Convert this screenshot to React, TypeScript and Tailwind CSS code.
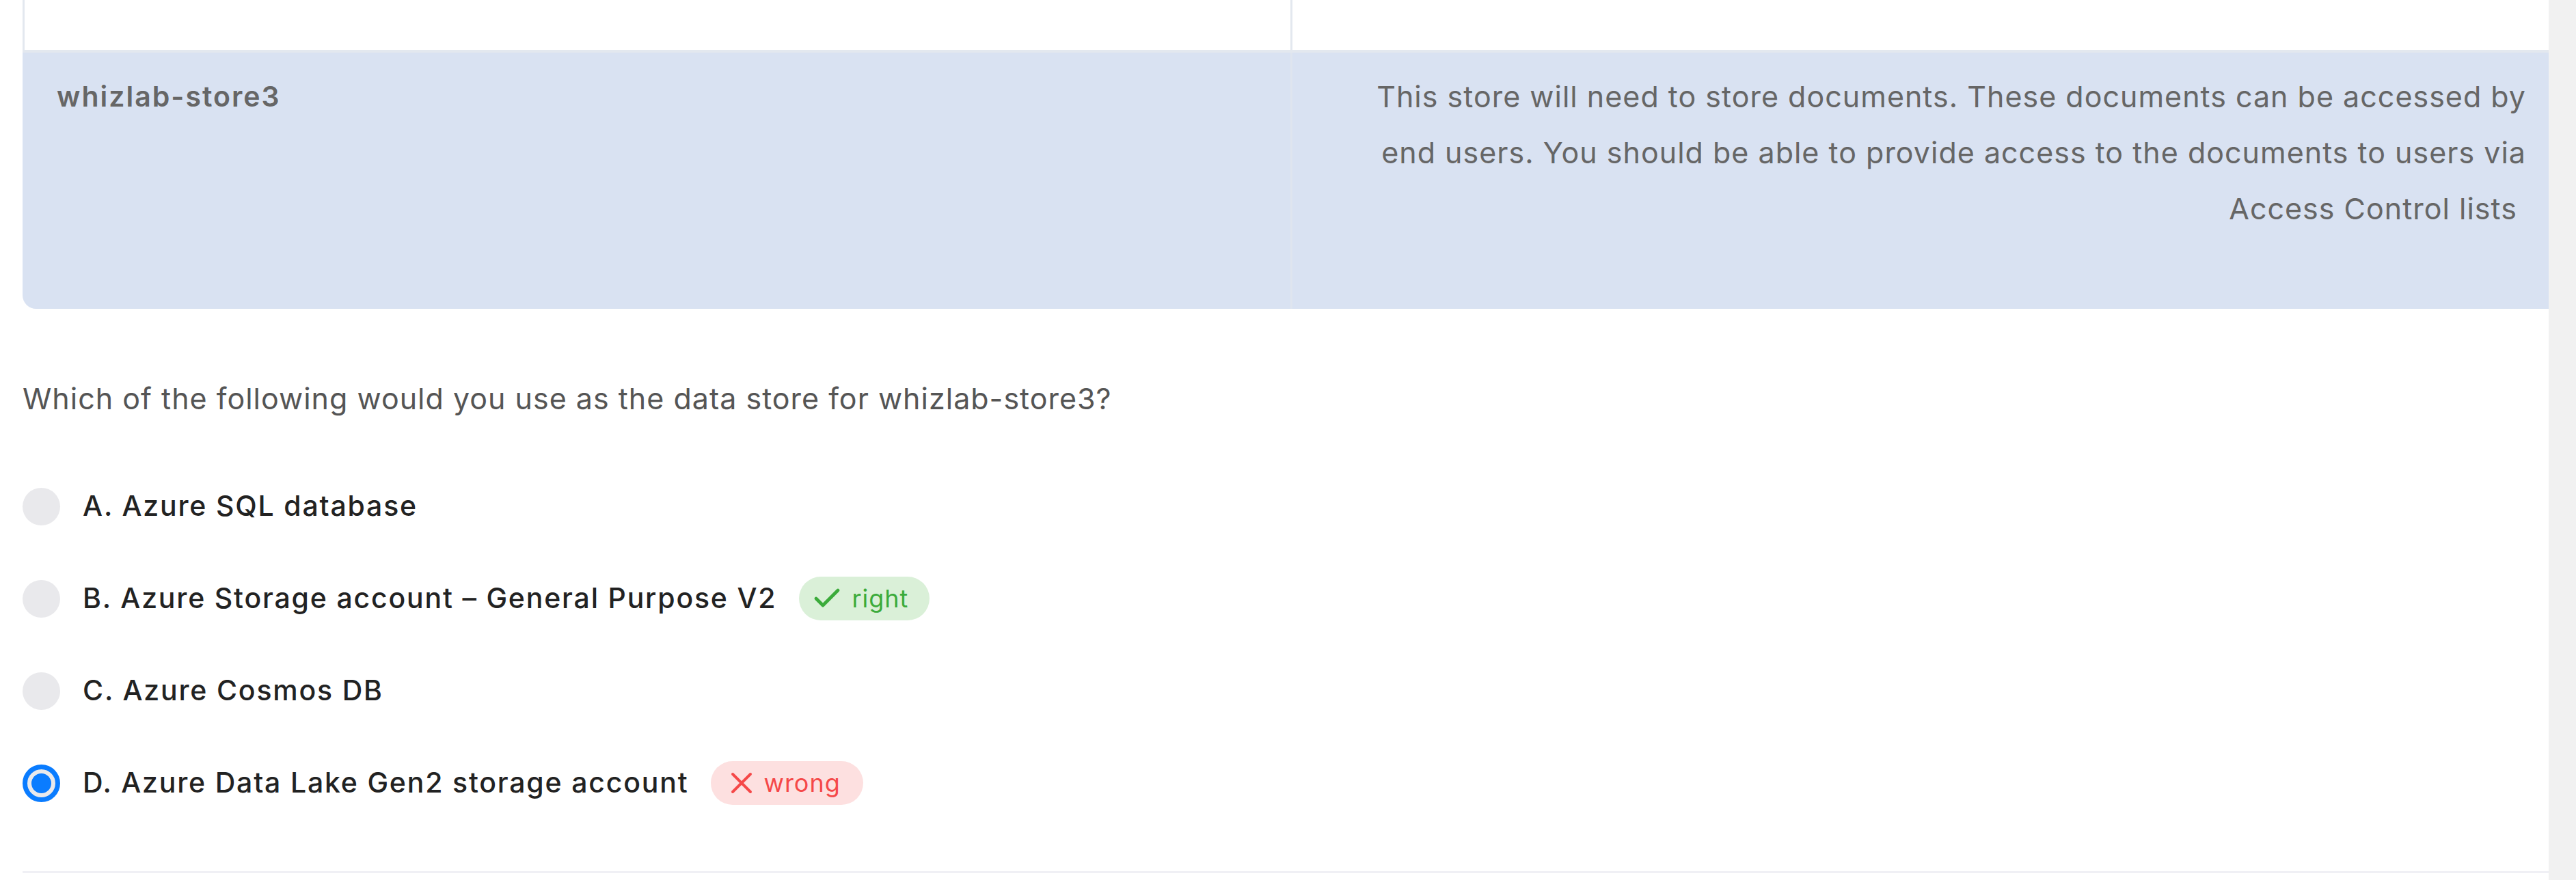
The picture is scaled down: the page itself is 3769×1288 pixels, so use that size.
import { Check, X } from "lucide-react";

const options = [
  { key: "A", label: "Azure SQL database" },
  { key: "B", label: "Azure Storage account – General Purpose V2", status: "right" },
  { key: "C", label: "Azure Cosmos DB" },
  { key: "D", label: "Azure Data Lake Gen2 storage account", status: "wrong", selected: true },
];

const Radio = ({ selected }: { selected?: boolean }) => {
  if (selected) {
    return (
      <span className="flex h-[55px] w-[55px] shrink-0 items-center justify-center rounded-full border-[7px] border-[#0a7cff] bg-[#e9e9ec]">
        <span className="h-[29px] w-[29px] rounded-full bg-[#0a7cff]" />
      </span>
    );
  }
  return <span className="h-[55px] w-[55px] shrink-0 rounded-full bg-[#e9e9ec]" />;
};

const Badge = ({ status }: { status: string }) => {
  if (status === "right") {
    return (
      <span className="flex h-[64px] items-center gap-[12px] rounded-full bg-[#daf0d8] pl-[17px] pr-[31px] text-[36px] tracking-[1px] text-[#3bab3b]">
        <Check size={48} strokeWidth={2.4} />
        right
      </span>
    );
  }
  return (
    <span className="flex h-[64px] items-center gap-[6px] rounded-full bg-[#fde0e0] pl-[19px] pr-[33px] text-[36px] tracking-[1px] text-[#f54848]">
      <X size={52} strokeWidth={1.8} />
      wrong
    </span>
  );
};

export default function App() {
  return (
    <div className="flex h-[1288px] w-full bg-white font-['Inter','Liberation_Sans',sans-serif]">
      <main className="flex-1 overflow-hidden pl-[33px]">
        {/* table, scrolled so only the last rows show */}
        <div className="flex h-[77px] border-b-[4px] border-[#e3e8ef]">
          <div className="w-[1858px] border-l-[3px] border-r-[3px] border-[#e3e8ef]" />
          <div className="flex-1" />
        </div>
        <div className="flex h-[375px] rounded-bl-[20px] bg-[#d9e2f2] leading-[82px]">
          <div className="w-[1858px] border-r-[3px] border-[#dfe5ef] pl-[50px] pt-[23px] text-[41px] font-semibold tracking-[2px] text-[#666]">
            whizlab-store3
          </div>
          <div className="flex-1 pl-[80px] pr-[33px] pt-[23px] text-right text-[43px] tracking-[1px] text-[#666]">
            This store will need to store documents. These documents can be accessed by end users. You should be able to provide access to the documents to users via Access Control lists&nbsp;
          </div>
        </div>

        <p className="mt-[99px] text-[43px] leading-[1.5] tracking-[1px] text-[#555]">
          Which of the following would you use as the data store for whizlab-store3?
        </p>

        <div className="mt-[98px] flex flex-col gap-[80px]">
          {options.map((o) => (
            <div key={o.key} className="flex h-[55px] items-center">
              <Radio selected={o.selected} />
              <span className="ml-[33px] text-[41px] font-medium tracking-[1.8px] text-[#222]">
                {o.key}. {o.label}
              </span>
              {o.status && (
                <span className="ml-[33px]">
                  <Badge status={o.status} />
                </span>
              )}
            </div>
          ))}
        </div>

        <div className="mt-[101px] h-[3px] bg-[#f0f0f5]" />
      </main>
      <div className="w-[40px] bg-[#f1f1f1]" />
    </div>
  );
}
